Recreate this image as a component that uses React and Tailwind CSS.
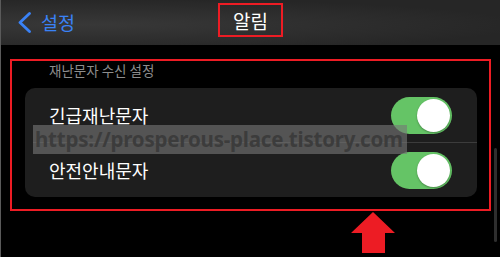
import React, { useState } from "react";

const rows = [
  { id: 1, label: "긴급재난문자" },
  { id: 2, label: "안전안내문자" },
];

function Toggle({ on, onClick }) {
  return (
    <button
      onClick={onClick}
      className={`relative h-[37px] w-[61px] rounded-full ${on ? "bg-[#65c466]" : "bg-[#3a3a3c]"}`}
    >
      <span
        className={`absolute top-[2px] h-[33px] w-[33px] rounded-full bg-white shadow-[0_1px_2px_rgba(0,0,0,0.3)] ${on ? "right-[2px]" : "left-[2px]"}`}
      />
    </button>
  );
}

export default function App() {
  const [state, setState] = useState({ 1: true, 2: true });

  return (
    <div
      className="relative h-[257px] w-[500px] overflow-hidden border-l border-[#5a5a5a] bg-black"
      style={{ fontFamily: '"Noto Sans CJK KR", "Noto Sans", sans-serif' }}
    >
      {/* header */}
      <div className="grid h-[45px] grid-cols-[1fr_auto_1fr] items-start bg-[radial-gradient(ellipse_at_18%_55%,#383838,#262626_75%)]">
        <div className="flex items-center pl-[16px] pt-[11px]">
          <svg width="15" height="21" viewBox="0 0 15 21" fill="none">
            <path d="M12.5 1.5 L3 10.5 L12.5 19.5" stroke="#3a82f6" strokeWidth="2.8" strokeLinecap="round" strokeLinejoin="round" />
          </svg>
          <span className="ml-[9px] text-[18.5px] leading-[22px] text-[#3a82f6]">설정</span>
        </div>
        <div className="mt-[3px] flex h-[34px] w-[65px] items-center justify-center border-2 border-[#ed1c24]">
          <span className="text-[19px] leading-none text-white">알림</span>
        </div>
        <div />
      </div>

      {/* highlighted settings section */}
      <div className="ml-[9px] mt-[14px] h-[152px] w-[481px] border-2 border-[#ed1c24] px-[13px] pr-[12px]">
        <div className="pl-[24px] text-[13.5px] leading-[18px] text-[#8d8d8d]">재난문자 수신 설정</div>
        <div className="relative mt-[9px] overflow-hidden rounded-[10px] bg-[#1e1e1e]">
          {rows.map((row, i) => (
            <div key={row.id}>
              {i > 0 && <div className="ml-[8px] h-px bg-[#3c3c3c]" />}
              <div className="flex h-[54px] items-center justify-between pl-[24px] pr-[25px]">
                <span className="text-[18px] text-white">{row.label}</span>
                <Toggle on={state[row.id]} onClick={() => setState({ ...state, [row.id]: !state[row.id] })} />
              </div>
            </div>
          ))}
          {/* watermark */}
          <div
            className="absolute left-[8px] top-[37px] flex h-[29px] w-[374px] items-center bg-[rgba(118,118,118,0.62)] pl-[2px] text-[20.5px] font-bold tracking-[-0.2px] text-[#3c3c3c]"
            style={{ fontFamily: '"Noto Sans", sans-serif' }}
          >
            https://prosperous-place.tistory.com
          </div>
        </div>
      </div>

      {/* arrow */}
      <svg className="ml-[349px] mt-px" width="46" height="42" viewBox="0 0 46 42">
        <polygon points="23,0 45,21 35,21 35,41 12,41 12,21 1,21" fill="#ed1c24" />
      </svg>

      {/* scrollbar */}
      <div className="absolute left-[493px] top-[148px] h-[94px] w-[3px] rounded-full bg-[#2e2e2e]" />
    </div>
  );
}
